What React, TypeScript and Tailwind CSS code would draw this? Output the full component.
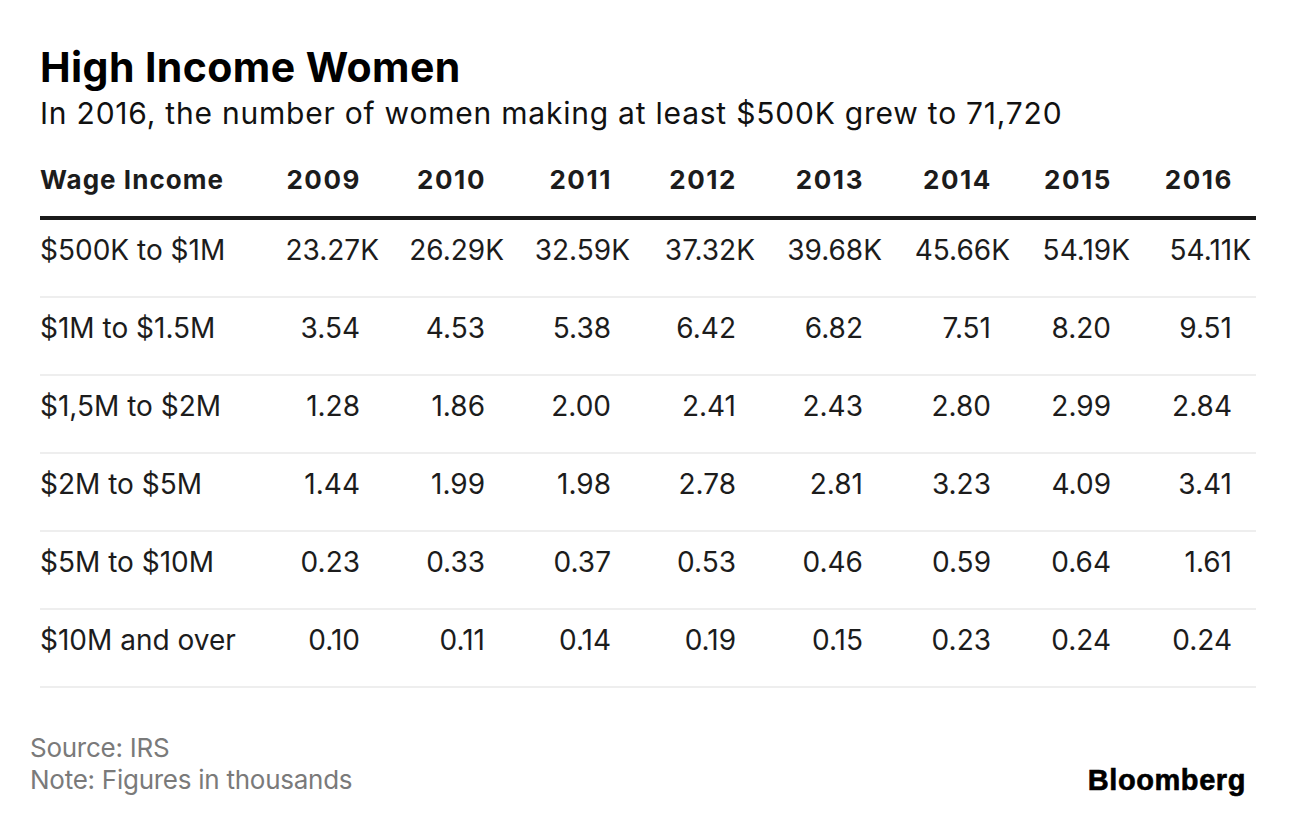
const years = ["2009", "2010", "2011", "2012", "2013", "2014", "2015", "2016"];

const rows: { label: string; values: string[]; k?: boolean }[] = [
  { label: "$500K to $1M", values: ["23.27", "26.29", "32.59", "37.32", "39.68", "45.66", "54.19", "54.11"], k: true },
  { label: "$1M to $1.5M", values: ["3.54", "4.53", "5.38", "6.42", "6.82", "7.51", "8.20", "9.51"] },
  { label: "$1,5M to $2M", values: ["1.28", "1.86", "2.00", "2.41", "2.43", "2.80", "2.99", "2.84"] },
  { label: "$2M to $5M", values: ["1.44", "1.99", "1.98", "2.78", "2.81", "3.23", "4.09", "3.41"] },
  { label: "$5M to $10M", values: ["0.23", "0.33", "0.37", "0.53", "0.46", "0.59", "0.64", "1.61"] },
  { label: "$10M and over", values: ["0.10", "0.11", "0.14", "0.19", "0.15", "0.23", "0.24", "0.24"] },
];

const cols = "grid grid-cols-[196px_124px_125px_126px_125px_127px_128px_120px_121px] pr-[24px]";

export default function App() {
  return (
    <div className="min-h-[838px] w-full bg-white font-['Inter','Liberation_Sans',sans-serif] text-[#1c1c1c]">
      <div className="px-[40px] pt-[47px]">
        <h1 className="text-[41px] font-bold leading-[40px] tracking-[0.01em] text-black">High Income Women</h1>
        <p className="mt-[11px] text-[30px] leading-[30px] tracking-[0.026em] text-[#111]">
          In 2016, the number of women making at least $500K grew to 71,720
        </p>

        {/* table */}
        <div className="mt-[38px]">
          <div className={`${cols} items-center border-b-[4px] border-[#1a1a1a] pb-[22px] text-[26px] font-bold leading-[28px] tracking-[0.04em]`}>
            <div>Wage Income</div>
            {years.map((y) => (
              <div key={y} className="-mr-[1px] text-right tracking-[0.06em]">
                {y}
              </div>
            ))}
          </div>

          {rows.map((r) => (
            <div
              key={r.label}
              className={`${cols} border-b-2 border-[#eeeeee] pt-[16px] pb-[32px] text-[28px] leading-[28px]`}
            >
              <div>{r.label}</div>
              {r.values.map((v, i) => (
                <div key={i} className="text-right">
                  {v}
                  {r.k && <span className="-mr-[19px]">K</span>}
                </div>
              ))}
            </div>
          ))}
        </div>
      </div>

      {/* footer */}
      <div className="mt-[44px] flex items-end justify-between pl-[30px] pr-[50px]">
        <div className="text-[26px] leading-[32px] tracking-[-0.01em] text-[#7a7a7a]">
          <div>Source: IRS</div>
          <div>Note: Figures in thousands</div>
        </div>
        <div className="pb-[1px] font-['Liberation_Sans',sans-serif] text-[29px] font-bold leading-[29px] tracking-[0.02em] text-black [-webkit-text-stroke:0.6px_black]">
          Bloomberg
        </div>
      </div>
    </div>
  );
}
